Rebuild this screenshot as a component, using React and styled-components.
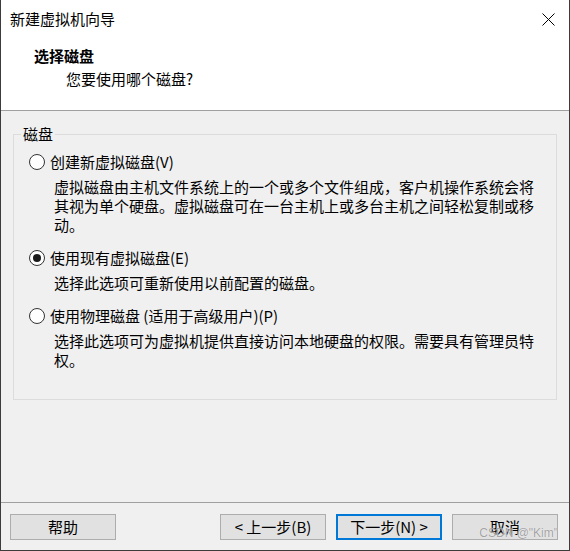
import React from "react";
import styled, { createGlobalStyle } from "styled-components";

const Global = createGlobalStyle`
  html, body { margin: 0; padding: 0; background: #ffffff; }
  * { box-sizing: border-box; }
  body {
    font-family: "Noto Sans CJK SC", "Noto Sans", sans-serif;
    font-size: 15px;
    color: #000;
  }
`;

const Window = styled.div`
  position: relative;
  width: 570px;
  height: 551px;
  display: flex;
  flex-direction: column;
  background: #f0f0f0;
  border-left: 1px solid #3c3c3c;
  border-right: 1px solid #3c3c3c;
  border-bottom: 1px solid #3c3c3c;
`;

const TopArea = styled.div`
  background: #ffffff;
  border-bottom: 1px solid #a0a0a0;
`;

const TitleBar = styled.div`
  height: 38px;
  display: flex;
  align-items: center;
  justify-content: space-between;
  padding: 0 14px 0 9px;
`;

const Title = styled.div`
  font-size: 15px;
  line-height: 20px;
`;

const CloseButton = styled.div`
  width: 13px;
  height: 13px;
  display: flex;
`;

const Header = styled.div`
  height: 72px;
  padding: 8px 0 0 33px;
`;

const Heading = styled.div`
  font-weight: 700;
  font-size: 15px;
  line-height: 20px;
`;

const SubHeading = styled.div`
  margin: 3px 0 0 32px;
  font-size: 15px;
  line-height: 20px;
`;

const Body = styled.div`
  flex: 1;
  padding: 13px 12px 0 12px;
`;

const GroupBox = styled.fieldset`
  margin: 0;
  border: 1px solid #dcdcdc;
  padding: 0 12px 30px 7px;
`;

const GroupTitle = styled.legend`
  padding: 0 2px;
  font-size: 15px;
  line-height: 20px;
`;

const Options = styled.div`
  display: flex;
  flex-direction: column;
  gap: 14px;
  padding: 8px 0 0 8px;
`;

const Option = styled.div`
  display: flex;
  flex-direction: column;
`;

const RadioRow = styled.label`
  display: flex;
  align-items: center;
  gap: 5px;
  height: 20px;
  line-height: 20px;
`;

const Radio = styled.span`
  width: 16px;
  height: 16px;
  border-radius: 50%;
  border: 1px solid #333333;
  background: #ffffff;
  display: inline-flex;
  align-items: center;
  justify-content: center;
  flex: none;
  &::after {
    content: "";
    width: 8px;
    height: 8px;
    border-radius: 50%;
    background: ${(p) => (p.$checked ? "#1a1a1a" : "transparent")};
  }
`;

const Desc = styled.div`
  margin: 5px 0 0 25px;
  max-width: 482px;
  line-height: 19px;
`;

const Footer = styled.div`
  height: 48px;
  border-top: 1px solid #a0a0a0;
  display: flex;
  gap: 10px;
  padding: 11px 11px 10px 9px;
`;

const Button = styled.div`
  width: 106px;
  height: 26px;
  background: #e1e1e1;
  border: ${(p) => (p.$default ? "2px solid #0078d7" : "1px solid #adadad")};
  display: flex;
  align-items: center;
  justify-content: center;
  font-size: 15px;
  line-height: 20px;
  margin-right: ${(p) => (p.$pushLeft ? "auto" : "0")};
`;

const Watermark = styled.div`
  position: absolute;
  right: 11px;
  bottom: 10px;
  font-family: "Liberation Sans", Arial, sans-serif;
  font-size: 12px;
  line-height: 14px;
  color: rgba(140, 140, 140, 0.8);
  text-shadow: 0 0 1px #ffffff;
  pointer-events: none;
`;

const options = [
  {
    label: "创建新虚拟磁盘(V)",
    desc: "虚拟磁盘由主机文件系统上的一个或多个文件组成，客户机操作系统会将其视为单个硬盘。虚拟磁盘可在一台主机上或多台主机之间轻松复制或移动。",
    checked: false,
  },
  {
    label: "使用现有虚拟磁盘(E)",
    desc: "选择此选项可重新使用以前配置的磁盘。",
    checked: true,
  },
  {
    label: "使用物理磁盘 (适用于高级用户)(P)",
    desc: "选择此选项可为虚拟机提供直接访问本地硬盘的权限。需要具有管理员特权。",
    checked: false,
  },
];

export default function App() {
  return (
    <>
      <Global />
      <Window>
        <TopArea>
          <TitleBar>
            <Title>新建虚拟机向导</Title>
            <CloseButton>
              <svg width="13" height="13" viewBox="0 0 13 13">
                <path d="M0.5 0.5 L12.5 12.5 M12.5 0.5 L0.5 12.5" stroke="#000" strokeWidth="1" fill="none" />
              </svg>
            </CloseButton>
          </TitleBar>
          <Header>
            <Heading>选择磁盘</Heading>
            <SubHeading>您要使用哪个磁盘?</SubHeading>
          </Header>
        </TopArea>
        <Body>
          <GroupBox>
            <GroupTitle>磁盘</GroupTitle>
            <Options>
              {options.map((o) => (
                <Option key={o.label}>
                  <RadioRow>
                    <Radio $checked={o.checked} />
                    <span>{o.label}</span>
                  </RadioRow>
                  <Desc>{o.desc}</Desc>
                </Option>
              ))}
            </Options>
          </GroupBox>
        </Body>
        <Footer>
          <Button $pushLeft>帮助</Button>
          <Button>&lt; 上一步(B)</Button>
          <Button $default>下一步(N) &gt;</Button>
          <Button>取消</Button>
        </Footer>
        <Watermark>CSDN @"Kim"</Watermark>
      </Window>
    </>
  );
}
